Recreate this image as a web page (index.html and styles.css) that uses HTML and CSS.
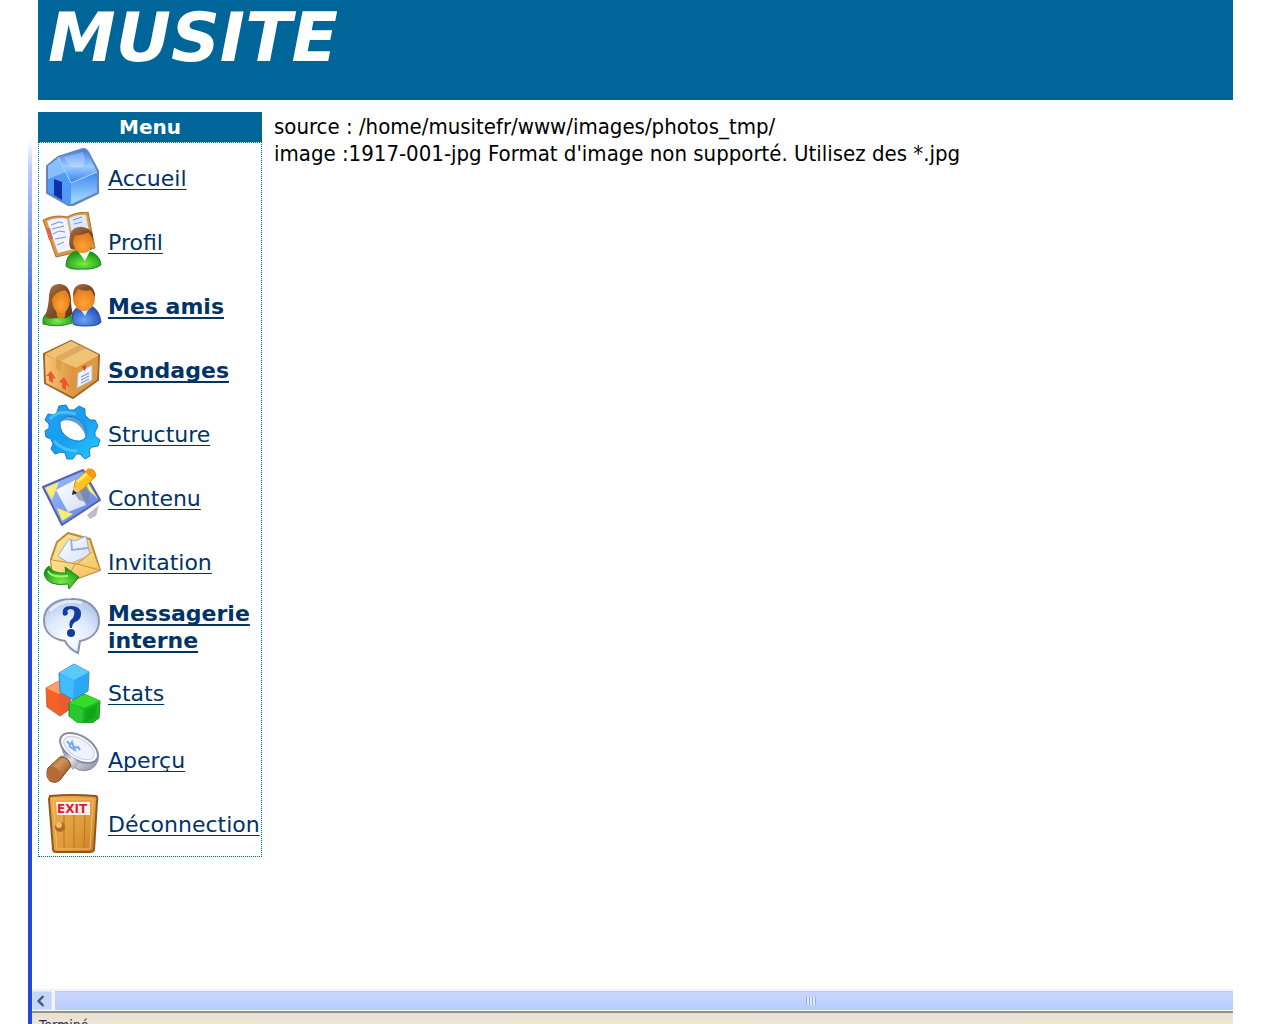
FILE: index.html
```html
<!DOCTYPE html>
<html lang="fr">
<head>
    <meta charset="UTF-8">
    <meta name="viewport" content="width=device-width, initial-scale=1.0">
    <title>MUSITE</title>
    <link rel="stylesheet" href="styles.css">
</head>
<body>

<!-- Shared gradients for the menu icons -->
<svg class="defs" width="0" height="0" aria-hidden="true">
    <defs>
        <linearGradient id="blue" x1="0" y1="0" x2="1" y2="1"><stop offset="0" stop-color="#b4dcff"/><stop offset=".5" stop-color="#2f83f4"/><stop offset="1" stop-color="#92d2ff"/></linearGradient>
        <linearGradient id="roof" x1="0" y1="0" x2="0" y2="1"><stop offset="0" stop-color="#3f7dee"/><stop offset=".5" stop-color="#9ccbff"/><stop offset="1" stop-color="#3480f2"/></linearGradient>
        <linearGradient id="wall" x1="0" y1="0" x2="0" y2="1"><stop offset="0" stop-color="#3d86f3"/><stop offset="1" stop-color="#a9dfff"/></linearGradient>
        <radialGradient id="green" cx=".5" cy=".7" r=".6"><stop offset="0" stop-color="#7bec45"/><stop offset="1" stop-color="#189b18"/></radialGradient>
        <radialGradient id="shirt" cx=".4" cy=".7" r=".7"><stop offset="0" stop-color="#6da3f5"/><stop offset="1" stop-color="#204bb5"/></radialGradient>
        <radialGradient id="skin" cx=".5" cy=".7" r=".7"><stop offset="0" stop-color="#ffa335"/><stop offset="1" stop-color="#dc7417"/></radialGradient>
        <linearGradient id="hair" x1="0" y1="0" x2="1" y2="1"><stop offset="0" stop-color="#a97043"/><stop offset="1" stop-color="#57321a"/></linearGradient>
        <linearGradient id="wood" x1="0" y1="0" x2="1" y2="1"><stop offset="0" stop-color="#eeb04f"/><stop offset=".6" stop-color="#e09c3a"/><stop offset="1" stop-color="#c37e28"/></linearGradient>
        <linearGradient id="cardboard" x1="0" y1="0" x2="1" y2="0"><stop offset="0" stop-color="#f8c777"/><stop offset="1" stop-color="#da9038"/></linearGradient>
        <linearGradient id="cyan" x1="0" y1="0" x2="1" y2="1"><stop offset="0" stop-color="#22a0f2"/><stop offset=".5" stop-color="#179df0"/><stop offset="1" stop-color="#29cdfd"/></linearGradient>
        <linearGradient id="pad" x1="0" y1="0" x2="1" y2="1"><stop offset="0" stop-color="#a9c4ff"/><stop offset="1" stop-color="#5a7cdd"/></linearGradient>
        <linearGradient id="paper" x1="0" y1="0" x2="1" y2="1"><stop offset="0" stop-color="#ffffff"/><stop offset="1" stop-color="#d3dff8"/></linearGradient>
        <linearGradient id="envelope" x1="0" y1="0" x2="1" y2="1"><stop offset="0" stop-color="#ffe9a2"/><stop offset="1" stop-color="#f3ba52"/></linearGradient>
        <radialGradient id="bubble" cx=".45" cy=".75" r=".9"><stop offset="0" stop-color="#ffffff"/><stop offset=".5" stop-color="#dce8fb"/><stop offset="1" stop-color="#9cb4de"/></radialGradient>
        <linearGradient id="handle" x1="0" y1="0" x2="1" y2="1"><stop offset="0" stop-color="#8b4b1d"/><stop offset=".4" stop-color="#d6935a"/><stop offset="1" stop-color="#75380f"/></linearGradient>
        <linearGradient id="steel" x1="0" y1="0" x2="1" y2="1"><stop offset="0" stop-color="#8c8f9c"/><stop offset=".5" stop-color="#dfe2ea"/><stop offset="1" stop-color="#85899a"/></linearGradient>
    </defs>
</svg>

<div class="window">
    <header class="banner">
        <h1>MUSITE</h1>
    </header>

    <div class="page">
        <nav class="menu" aria-labelledby="menuTitle">
            <h2 id="menuTitle">Menu</h2>
            <ul>
                <li>
                    <svg class="icon" viewBox="0 0 60 60" aria-hidden="true">
                        <path d="M5 18 16 9 41 1Q44 1 46 4L56 23V45L31 57H26L5 45Z" fill="url(#blue)" stroke="#6684b5" stroke-width="2" stroke-linejoin="round"/>
                        <path d="M17 9 41 2Q44 2 46 5L55 24 29 35Z" fill="url(#roof)"/>
                        <path d="M6 19 17 10 29 34 28 56 6 44Z" fill="#4f9bf7"/>
                        <path d="M6 18 17 10 24 24 6 31Z" fill="#a3cfff" opacity=".7"/>
                        <path d="M29 35 55 24V44L29 56Z" fill="url(#wall)"/>
                        <path d="M22 9 41 4Q45 12 41 18 31 22 26 16Z" fill="#fff" opacity=".25"/>
                        <path d="M12 31 20 34V52L12 47Z" fill="#0b32a8"/>
                        <path d="M16 9 29 35 55 24" fill="none" stroke="#b2d9ff"/>
                    </svg>
                    <a href="#">Accueil</a>
                </li>
                <li>
                    <svg class="icon" viewBox="0 0 60 60" aria-hidden="true">
                        <path d="M1 8Q13 2 25 5 34 0 46 0L53 36 14 45Z" fill="#d99843" stroke="#a7712f" stroke-linejoin="round"/>
                        <path d="M5 9Q16 4 26 7L32 37 16 41Z" fill="#eff4ff"/>
                        <path d="M26 7Q34 2 44 3L49 31 32 37Z" fill="#dce8fb"/>
                        <path d="M26 7 32 37" stroke="#d1aa74" stroke-width="2"/>
                        <path d="M9 13l8-3 4 1M10 17l12-3M11 22l6-3 6 1M13 27l11-2M15 33l7-3M31 8l9-3M32 12l8-2M33 17l6-2" fill="none" stroke="#748edb"/>
                        <path d="M4 17 8 16 11 27 7 28Z" fill="#dd674e"/>
                        <path d="M29 37Q26 35 28 22 31 14 40 15 51 16 51 27L49 38Z" fill="url(#hair)"/>
                        <path d="M24 54Q24 42 34 39L46 39Q58 42 59 53 52 58 40 57 28 58 24 54Z" fill="url(#green)" stroke="#208524"/>
                        <path d="M36 39 43 49 48 39Z" fill="#eefbe9"/>
                        <ellipse cx="41" cy="30" rx="10" ry="11" fill="url(#skin)"/>
                        <path d="M30 28Q30 16 40 16 51 17 51 26L47 20Q38 24 31 23Z" fill="url(#hair)"/>
                    </svg>
                    <a href="#">Profil</a>
                </li>
                <li>
                    <svg class="icon" viewBox="0 0 60 60" aria-hidden="true">
                        <path d="M31 46Q28 33 39 30H49Q57 33 59 46 57 50 44 50 34 50 31 48Z" fill="url(#shirt)" stroke="#24469a"/>
                        <path d="M37 31 43 40 48 30Z" fill="#dceaff"/>
                        <ellipse cx="42" cy="22" rx="11" ry="13" fill="url(#skin)"/>
                        <path d="M31 21Q30 8 42 8 53 9 53 21L49 14Q42 16 36 13Z" fill="url(#hair)"/>
                        <path d="M1 46Q0 39 9 34H24Q31 38 30 47 16 52 1 48Z" fill="url(#green)" stroke="#24852c"/>
                        <path d="M3 40Q7 30 7 19 8 8 17 8 28 8 29 23 29 32 31 38L24 42H12Q7 44 3 40Z" fill="url(#hair)"/>
                        <path d="M14 32H24L23 41Q19 44 15 41Z" fill="#e3811f"/>
                        <ellipse cx="19" cy="24" rx="9" ry="13" fill="url(#skin)"/>
                        <path d="M9 24Q9 10 18 9 28 10 28 24 27 17 23 14 14 15 9 24Z" fill="url(#hair)"/>
                    </svg>
                    <a href="#" class="new">Mes amis</a>
                </li>
                <li>
                    <svg class="icon" viewBox="0 0 60 60" aria-hidden="true">
                        <path d="M2 14 29 1 57 15 56 40 31 58 3 43Z" fill="#df9c45" stroke="#99652c" stroke-width="2" stroke-linejoin="round"/>
                        <path d="M3 14 29 1 57 15 34 28Z" fill="#efc276"/>
                        <path d="M3 15 34 28 31 57 4 43Z" fill="url(#cardboard)"/>
                        <path d="M34 28 56 16 55 39 31 57Z" fill="#df973e"/>
                        <path d="M14 17 39 4 44 8 19 21V32L14 28Z" fill="#c99149" opacity=".5"/>
                        <path d="M9 31 4 36 7 36V41L11 43V38L14 39ZM22 37 17 42 20 43V48L24 50V45L28 47Z" fill="#ec5631"/>
                        <path d="M36 33 50 25V40L35 48Z" fill="#edf2ff" stroke="#b7bed2"/>
                        <path d="M39 37 47 33M39 40 47 36M39 43 47 39" stroke="#6b84c9"/>
                        <path d="M40 27 44 25 43 31Z" fill="#d53830"/>
                    </svg>
                    <a href="#" class="new">Sondages</a>
                </li>
                <li>
                    <svg class="icon" viewBox="0 0 60 60" aria-hidden="true">
                        <path fill-rule="evenodd" d="M15 8 17 2 24 1 27 6 32 6 37 2 43 5 43 11 48 16 53 16 56 22 53 28 53 32 58 36 56 42 50 43 47 46 48 52 43 55 38 50 34 50 31 55 25 55 23 49 19 48 13 50 9 45 11 40 9 35 4 33 3 27 7 24 7 20 3 16 6 10 12 11ZM18 18Q17 29 28 35 39 40 44 33 46 22 36 15 24 8 18 18Z" fill="url(#cyan)" stroke="#117ccf" stroke-linejoin="round"/>
                        <path d="M18 18Q24 8 36 15 46 22 44 33 41 24 34 19 25 14 18 18Z" fill="#086bc0" opacity=".65"/>
                        <path d="M8 15Q16 5 34 10M12 37Q21 47 35 47" fill="none" stroke="#78dcff" stroke-width="3" opacity=".5"/>
                    </svg>
                    <a href="#">Structure</a>
                </li>
                <li>
                    <svg class="icon" viewBox="0 0 60 60" aria-hidden="true">
                        <path d="M45 47 57 37 54 48 48 51Z" fill="#bdbdc8"/>
                        <path d="M1 19 41 2 58 32 20 57Z" fill="url(#pad)" stroke="#5065ae" stroke-width="2" stroke-linejoin="round"/>
                        <path d="M3 20 17 14 10 32ZM40 5 56 31 44 20ZM20 53 15 40 31 46Z" fill="#f8ec73"/>
                        <path d="M14 22 33 12 44 37 26 44Z" fill="url(#paper)"/>
                        <path d="M32 25 44 17Q49 22 47 35L37 32Z" fill="#7a8299" opacity=".65"/>
                        <path d="M31 26 33 14 46 1Q53 0 54 8L40 22Z" fill="#ffc321" stroke="#e18b17"/>
                        <path d="M35 14 48 3" stroke="#ffec63" stroke-width="3"/>
                        <path d="M46 1Q53 0 54 8L51 11 43 4Z" fill="#f49b16"/>
                        <path d="M31 26 32 19 38 23Z" fill="#e5c397"/>
                        <path d="M30 27 31 22 35 25Z" fill="#222"/>
                    </svg>
                    <a href="#">Contenu</a>
                </li>
                <li>
                    <svg class="icon" viewBox="0 0 60 60" aria-hidden="true">
                        <path d="M9 27 15 10 26 1 48 7 58 38 28 49 10 42Z" fill="url(#envelope)" stroke="#b78b39" stroke-width="2" stroke-linejoin="round"/>
                        <path d="M16 24 27 7 33 9 44 4 48 23 28 32Z" fill="url(#paper)" stroke="#9cabd8"/>
                        <path d="M29 7 30 18 46 16" fill="none" stroke="#9aade0" stroke-width="2"/>
                        <path d="M9 28 35 31 50 19 58 38 28 49 11 42Z" fill="url(#envelope)"/>
                        <path d="M10 28 35 32 50 20M35 32 58 38M33 32 25 47" fill="none" stroke="#c99336"/>
                        <path d="M7 34Q10 42 24 41L23 35 37 45 27 57 26 52Q5 55 2 42 3 36 7 34Z" fill="url(#green)" stroke="#248420" stroke-linejoin="round"/>
                        <path d="M6 39Q9 46 26 44" fill="none" stroke="#a9f36d" stroke-width="2"/>
                    </svg>
                    <a href="#">Invitation</a>
                </li>
                <li class="double">
                    <svg class="icon" viewBox="0 0 60 60" aria-hidden="true">
                        <path d="M29 2C46 1 57 12 57 24 57 36 48 42 38 44L36 56Q27 52 23 44C9 42 2 34 2 23 2 11 12 2 29 2Z" fill="url(#bubble)" stroke="#8795b3" stroke-width="2"/>
                        <path d="M8 14Q20 1 40 6" fill="none" stroke="#fff" stroke-width="3" opacity=".6"/>
                        <path d="M21 18Q19 9 29 9 39 9 39 17 39 23 33 25 30 27 30 31H28Q26 24 31 21 35 12 28 12 24 13 26 16 25 20 21 18Z" fill="#133c9c"/>
                        <circle cx="29" cy="36" r="4" fill="#133c9c"/>
                    </svg>
                    <a href="#" class="new">Messagerie interne</a>
                </li>
                <li class="double">
                    <svg class="icon" viewBox="0 0 60 60" aria-hidden="true">
                        <path d="M4 25 17 18 29 24 28 46 18 53 5 44Z" fill="#f36327" stroke="#bb663f" stroke-linejoin="round"/>
                        <path d="M4 25 17 18 29 24 17 31Z" fill="#ff9b69"/>
                        <path d="M17 31 29 24 28 46 18 53Z" fill="#ed5930"/>
                        <path d="M27 40 42 31 58 38 57 55 50 60H36L27 53Z" fill="#1cb522" stroke="#278b27" stroke-linejoin="round"/>
                        <path d="M27 40 43 31 58 38 42 45Z" fill="#32dc29"/>
                        <path d="M28 41 41 46 40 60H36L28 54Z" fill="#28c92e"/>
                        <path d="M44 47 55 42 53 55 43 59Z" fill="#12a518"/>
                        <path d="M17 10 32 1 47 9 46 28 31 37 18 29Z" fill="#29a9f4" stroke="#4486ba" stroke-linejoin="round"/>
                        <path d="M17 10 32 1 47 9 32 17Z" fill="#5acafa"/>
                        <path d="M18 11 32 17 31 36 19 29Z" fill="#44baff"/>
                    </svg>
                    <a href="#">Stats</a>
                </li>
                <li class="tall">
                    <svg class="icon" viewBox="0 0 60 60" aria-hidden="true">
                        <path d="M18 10Q22 34 37 40 52 43 56 30V24L20 7Z" fill="url(#steel)" stroke="#83899d"/>
                        <ellipse cx="37" cy="18" rx="21" ry="12" transform="rotate(32 37 18)" fill="#fcfdff" stroke="#888ea2" stroke-width="2"/>
                        <ellipse cx="37" cy="18" rx="17" ry="9" transform="rotate(32 37 18)" fill="#edf2fc" stroke="#c6cddd"/>
                        <path d="M25 11l3 4 2-3 2 6 4-1 2 3M27 16l7 5" fill="none" stroke="#79a7ef" stroke-width="2"/>
                        <path d="M18 26 27 24 37 33 31 40Z" fill="url(#steel)"/>
                        <path d="M6 38 18 27Q27 27 29 36L18 50Q14 54 8 51 3 46 6 38Z" fill="url(#handle)" stroke="#744725"/>
                        <ellipse cx="12" cy="44" rx="6" ry="8" transform="rotate(-35 12 44)" fill="#b66b37"/>
                    </svg>
                    <a href="#">Aperçu</a>
                </li>
                <li class="last">
                    <svg class="icon" viewBox="0 0 60 60" aria-hidden="true">
                        <path d="M8 2Q30 0 54 2 56 3 55 7L52 56Q51 58 48 58H14Q11 58 11 55L7 5Z" fill="url(#wood)" stroke="#8b591e" stroke-width="2"/>
                        <path d="M11 5H51L48 55H15Z" fill="none" stroke="#f0be67"/>
                        <path d="M22 21V54M32 21V54M43 21 42 54" stroke="#b77423"/>
                        <path d="M14 8H48V21H15Z" fill="#fff2eb"/>
                        <text x="15" y="19" class="exit">EXIT</text>
                        <circle cx="18" cy="33" r="5" fill="#b36a21"/>
                        <circle cx="17" cy="31" r="3" fill="#f4bd72"/>
                    </svg>
                    <a href="#">Déconnection</a>
                </li>
            </ul>
        </nav>

        <main class="content">
            source : /home/musitefr/www/images/photos_tmp/<br>
            image :1917-001-jpg Format d'image non supporté. Utilisez des *.jpg
        </main>
    </div>

    <div class="scrollbar">
        <button type="button" aria-label="Défiler à gauche">
            <svg viewBox="0 0 10 10" aria-hidden="true"><path d="M7 1 3 5 7 9" fill="none" stroke="#465a86" stroke-width="2"/></svg>
        </button>
        <div class="thumb"><span class="grip"></span></div>
    </div>
    <footer class="status">Terminé</footer>
</div>

</body>
</html>
```
FILE: styles.css
```css
* {
    box-sizing: border-box;
}

body {
    margin: 0;
    background-color: #fff;
    font-family: "DejaVu Sans", Verdana, sans-serif;
    overflow: hidden;
}

.defs {
    display: block;
}

.window {
    display: flex;
    flex-direction: column;
    height: 100vh;
    margin-left: 28px;
    margin-right: 47px;
    padding-left: 4px;
    background: linear-gradient(to bottom, #fff 140px, #b9cdf8 170px, #4470dc 300px, #1f4bd8 450px) left / 4px 100% no-repeat;
}

.banner {
    flex: none;
    height: 100px;
    margin-left: 6px;
    padding-left: 10px;
    background-color: #006699;
}

h1 {
    margin: 0;
    color: #fff;
    font-size: 68px;
    font-style: italic;
    font-weight: bold;
    line-height: 76px;
}

.page {
    display: flex;
    flex: 1;
    align-items: flex-start;
    gap: 12px;
    min-height: 0;
    padding: 12px 0 0 6px;
}

.menu {
    flex: none;
    width: 224px;
}

h2 {
    margin: 0;
    padding-top: 1px;
    background-color: #006699;
    color: #fff;
    font-size: 20px;
    line-height: 29px;
    text-align: center;
}

.menu ul {
    margin: 0;
    padding: 3px 0 2px;
    border: 1px dotted #006699;
    list-style: none;
}

.menu li {
    display: flex;
    align-items: center;
    gap: 6px;
    height: 64px;
    padding-left: 3px;
}

.menu li.double {
    height: 66px;
}

.menu li.tall {
    height: 68px;
}

.menu li.last {
    height: 60px;
}

.icon {
    flex: none;
    width: 60px;
    height: 60px;
}

.exit {
    fill: #d81e35;
    font-family: "DejaVu Sans", Verdana, sans-serif;
    font-size: 12px;
    font-weight: bold;
}

.menu a {
    color: #003366;
    font-size: 22px;
    line-height: 27px;
    text-decoration-thickness: 1px;
    text-underline-offset: 3px;
    text-decoration-skip-ink: none;
}

.menu a.new {
    font-weight: bold;
    text-decoration-thickness: 2px;
}

.content {
    flex: 1;
    padding-top: 1px;
    color: #000;
    font-family: "DejaVu Sans Condensed", Tahoma, sans-serif;
    font-size: 22px;
    line-height: 27px;
}

.scrollbar {
    display: flex;
    flex: none;
    gap: 3px;
    height: 22px;
    padding: 1px 0;
    border-top: 1px solid #eef2f8;
    background-color: #f2f5fc;
}

.scrollbar button {
    width: 20px;
    padding: 0;
    border: 1px solid #d5e0fa;
    border-radius: 2px;
    background-color: #c5d5fb;
}

.scrollbar svg {
    display: block;
    width: 12px;
    height: 12px;
    margin-left: 2px;
}

.thumb {
    display: flex;
    flex: 1;
    align-items: center;
    justify-content: center;
    border-top: 1px solid #bccbe9;
    background: linear-gradient(to bottom, #c9d5fd, #b7cdfa);
}

.grip {
    width: 10px;
    height: 8px;
    margin-left: 334px;
    background: repeating-linear-gradient(to right, #91acd9 0, #91acd9 1px, #e2ecff 1px, #e2ecff 3px);
}

.status {
    flex: none;
    height: 13px;
    padding: 4px 0 0 7px;
    overflow: hidden;
    border-top: 2px solid #92928f;
    background: linear-gradient(to bottom, #e9dfcf, #ece9d8);
    color: #32285a;
    font-family: "DejaVu Sans Condensed", Tahoma, sans-serif;
    font-size: 14px;
    line-height: 16px;
}
```
